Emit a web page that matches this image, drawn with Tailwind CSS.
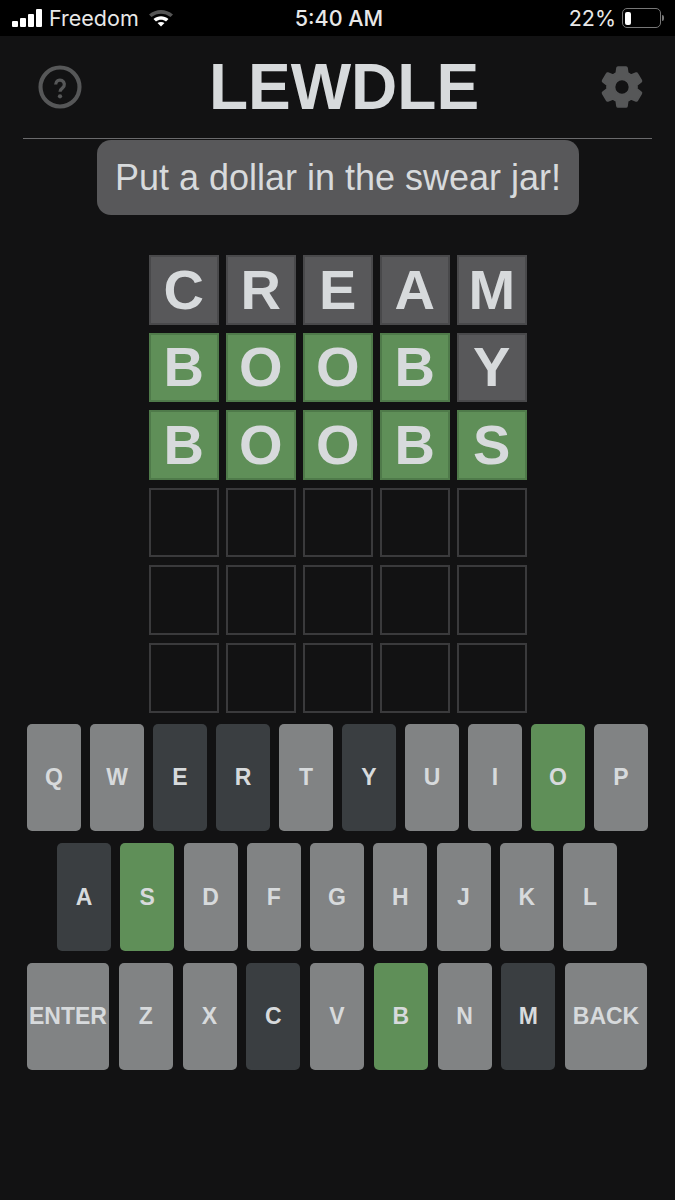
<!DOCTYPE html>
<html lang="en">
<head>
    <meta charset="UTF-8">
    <meta name="viewport" content="width=device-width, initial-scale=1.0">
    <script src="https://cdn.jsdelivr.net/npm/@tailwindcss/browser@4"></script>
    <title>Lewdle</title>
</head>
<body class="bg-[#121213] font-['Liberation_Sans',sans-serif] text-[#d7dadc]">
<div class="relative h-[1200px] w-[675px] overflow-hidden">
    <!-- status bar -->
    <div class="flex h-[36px] items-center justify-between bg-black pl-[12px] pr-[11px] font-['Inter',sans-serif] text-[21.5px] text-[#e8e8e8]">
        <div class="flex w-[190px] items-center">
            <div class="flex items-end gap-[2px]">
                <div class="h-[6px] w-[6px] rounded-[1px] bg-white"></div>
                <div class="h-[9px] w-[6px] rounded-[1px] bg-white"></div>
                <div class="h-[13px] w-[6px] rounded-[1px] bg-white"></div>
                <div class="h-[18px] w-[6px] rounded-[1px] bg-white"></div>
            </div>
            <span class="ml-[7px]">Freedom</span>
            <svg class="ml-[9px]" width="26" height="20" viewBox="0 0 26 20">
                <path d="M1 6.5 C8 0.5 18 0.5 25 6.5 L22.5 9 C17 4.5 9 4.5 3.5 9 Z" fill="#555"/>
                <path d="M5.5 11 C10 7.3 16 7.3 20.5 11 L18 13.5 C15 11 11 11 8 13.5 Z" fill="#fff"/>
                <path d="M9.5 15 C11.5 13.5 14.5 13.5 16.5 15 L13 18.5 Z" fill="#fff"/>
            </svg>
        </div>
        <span class="ml-[2px] font-medium">5:40 AM</span>
        <div class="flex w-[190px] items-center justify-end">
            <span>22%</span>
            <div class="ml-[6px] flex h-[20px] w-[39px] items-center rounded-[5px] border border-[#777] px-[2px]">
                <div class="h-[13px] w-[6px] rounded-[2px] bg-white"></div>
            </div>
            <div class="ml-[1px] h-[6px] w-[2px] rounded-r-sm bg-[#777]"></div>
        </div>
    </div>

    <!-- header -->
    <header class="mx-[23px] flex h-[103px] items-center justify-between border-b border-[#6a6a6c] pl-[11px] pr-[4px]">
        <svg width="52" height="52" viewBox="0 0 24 24" fill="none">
            <circle cx="12" cy="12" r="9" stroke="#565758" stroke-width="1.9"/>
            <path d="M10 10.8a2 2 0 1 1 3.2 1.6c-.8.6-1.2 1-1.2 1.8" stroke="#565758" stroke-width="1.5"/>
            <circle cx="12" cy="16.3" r="1" fill="#565758"/>
        </svg>
        <h1 class="flex-1 pl-[6px] text-center text-[64px] leading-none font-bold text-[#d7dadc]">LEWDLE</h1>
        <svg width="50" height="50" class="mx-[1px]" viewBox="0 0 24 24" fill="#565758" stroke="#565758" stroke-width="0.8" stroke-linejoin="round">
            <path d="M19.14 12.94c.04-.3.06-.61.06-.94 0-.32-.02-.64-.07-.94l2.03-1.58c.18-.14.23-.41.12-.61l-1.92-3.32c-.12-.22-.37-.29-.59-.22l-2.39.96c-.5-.38-1.03-.7-1.62-.94l-.36-2.54c-.04-.24-.24-.41-.48-.41h-3.84c-.24 0-.43.17-.47.41l-.36 2.54c-.59.24-1.13.57-1.62.94l-2.39-.96c-.22-.08-.47 0-.59.22L2.74 8.87c-.12.21-.08.47.12.61l2.03 1.58c-.05.3-.09.63-.09.94s.02.64.07.94l-2.03 1.58c-.18.14-.23.41-.12.61l1.92 3.32c.12.22.37.29.59.22l2.39-.96c.5.38 1.03.7 1.62.94l.36 2.54c.05.24.24.41.48.41h3.84c.24 0 .44-.17.47-.41l.36-2.54c.59-.24 1.13-.56 1.62-.94l2.39.96c.22.08.47 0 .59-.22l1.92-3.32c.12-.22.07-.47-.12-.61l-2.01-1.58zM12 15.6c-1.98 0-3.6-1.62-3.6-3.6s1.62-3.6 3.6-3.6 3.6 1.62 3.6 3.6-1.62 3.6-3.6 3.6z"/>
        </svg>
    </header>

    <!-- toast -->
    <div class="absolute left-[97px] top-[140px] flex h-[75px] w-[482px] items-center justify-center rounded-[14px] bg-[#58585a] text-[36px] text-[#d7dadc]">Put a dollar in the swear jar!</div>

    <!-- board -->
    <div class="mt-[116px] ml-[149px] grid w-[378px] grid-cols-[repeat(5,69.5px)] gap-x-[7.5px] gap-y-[8px] text-[56px] font-bold">
        <div class="flex h-[69.6px] items-center justify-center border-2 border-[#49494b] bg-[#58585a]">C</div>
        <div class="flex h-[69.6px] items-center justify-center border-2 border-[#49494b] bg-[#58585a]">R</div>
        <div class="flex h-[69.6px] items-center justify-center border-2 border-[#49494b] bg-[#58585a]">E</div>
        <div class="flex h-[69.6px] items-center justify-center border-2 border-[#49494b] bg-[#58585a]">A</div>
        <div class="flex h-[69.6px] items-center justify-center border-2 border-[#49494b] bg-[#58585a]">M</div>

        <div class="flex h-[69.6px] items-center justify-center border-2 border-[#4f7a4a] bg-[#5f8f58]">B</div>
        <div class="flex h-[69.6px] items-center justify-center border-2 border-[#4f7a4a] bg-[#5f8f58]">O</div>
        <div class="flex h-[69.6px] items-center justify-center border-2 border-[#4f7a4a] bg-[#5f8f58]">O</div>
        <div class="flex h-[69.6px] items-center justify-center border-2 border-[#4f7a4a] bg-[#5f8f58]">B</div>
        <div class="flex h-[69.6px] items-center justify-center border-2 border-[#49494b] bg-[#58585a]">Y</div>

        <div class="flex h-[69.6px] items-center justify-center border-2 border-[#4f7a4a] bg-[#5f8f58]">B</div>
        <div class="flex h-[69.6px] items-center justify-center border-2 border-[#4f7a4a] bg-[#5f8f58]">O</div>
        <div class="flex h-[69.6px] items-center justify-center border-2 border-[#4f7a4a] bg-[#5f8f58]">O</div>
        <div class="flex h-[69.6px] items-center justify-center border-2 border-[#4f7a4a] bg-[#5f8f58]">B</div>
        <div class="flex h-[69.6px] items-center justify-center border-2 border-[#4f7a4a] bg-[#5f8f58]">S</div>

        <div class="h-[69.6px] border-2 border-[#3a3a3c]"></div>
        <div class="h-[69.6px] border-2 border-[#3a3a3c]"></div>
        <div class="h-[69.6px] border-2 border-[#3a3a3c]"></div>
        <div class="h-[69.6px] border-2 border-[#3a3a3c]"></div>
        <div class="h-[69.6px] border-2 border-[#3a3a3c]"></div>

        <div class="h-[69.6px] border-2 border-[#3a3a3c]"></div>
        <div class="h-[69.6px] border-2 border-[#3a3a3c]"></div>
        <div class="h-[69.6px] border-2 border-[#3a3a3c]"></div>
        <div class="h-[69.6px] border-2 border-[#3a3a3c]"></div>
        <div class="h-[69.6px] border-2 border-[#3a3a3c]"></div>

        <div class="h-[69.6px] border-2 border-[#3a3a3c]"></div>
        <div class="h-[69.6px] border-2 border-[#3a3a3c]"></div>
        <div class="h-[69.6px] border-2 border-[#3a3a3c]"></div>
        <div class="h-[69.6px] border-2 border-[#3a3a3c]"></div>
        <div class="h-[69.6px] border-2 border-[#3a3a3c]"></div>
    </div>

    <!-- keyboard -->
    <div class="mt-[11px] flex flex-col gap-[12px] text-[23px] font-bold">
        <div class="ml-[27px] flex gap-[9px]">
            <div class="flex h-[107.5px] w-[54px] items-center justify-center rounded-[5px] bg-[#818384]">Q</div>
            <div class="flex h-[107.5px] w-[54px] items-center justify-center rounded-[5px] bg-[#818384]">W</div>
            <div class="flex h-[107.5px] w-[54px] items-center justify-center rounded-[5px] bg-[#3a3e41]">E</div>
            <div class="flex h-[107.5px] w-[54px] items-center justify-center rounded-[5px] bg-[#3a3e41]">R</div>
            <div class="flex h-[107.5px] w-[54px] items-center justify-center rounded-[5px] bg-[#818384]">T</div>
            <div class="flex h-[107.5px] w-[54px] items-center justify-center rounded-[5px] bg-[#3a3e41]">Y</div>
            <div class="flex h-[107.5px] w-[54px] items-center justify-center rounded-[5px] bg-[#818384]">U</div>
            <div class="flex h-[107.5px] w-[54px] items-center justify-center rounded-[5px] bg-[#818384]">I</div>
            <div class="flex h-[107.5px] w-[54px] items-center justify-center rounded-[5px] bg-[#5f8f58]">O</div>
            <div class="flex h-[107.5px] w-[54px] items-center justify-center rounded-[5px] bg-[#818384]">P</div>
        </div>
        <div class="ml-[57px] flex gap-[9.25px]">
            <div class="flex h-[107.5px] w-[54px] items-center justify-center rounded-[5px] bg-[#3a3e41]">A</div>
            <div class="flex h-[107.5px] w-[54px] items-center justify-center rounded-[5px] bg-[#5f8f58]">S</div>
            <div class="flex h-[107.5px] w-[54px] items-center justify-center rounded-[5px] bg-[#818384]">D</div>
            <div class="flex h-[107.5px] w-[54px] items-center justify-center rounded-[5px] bg-[#818384]">F</div>
            <div class="flex h-[107.5px] w-[54px] items-center justify-center rounded-[5px] bg-[#818384]">G</div>
            <div class="flex h-[107.5px] w-[54px] items-center justify-center rounded-[5px] bg-[#818384]">H</div>
            <div class="flex h-[107.5px] w-[54px] items-center justify-center rounded-[5px] bg-[#818384]">J</div>
            <div class="flex h-[107.5px] w-[54px] items-center justify-center rounded-[5px] bg-[#818384]">K</div>
            <div class="flex h-[107.5px] w-[54px] items-center justify-center rounded-[5px] bg-[#818384]">L</div>
        </div>
        <div class="ml-[27px] flex gap-[9.75px]">
            <div class="flex h-[107.5px] w-[82px] items-center justify-center rounded-[5px] bg-[#818384]">ENTER</div>
            <div class="flex h-[107.5px] w-[54px] items-center justify-center rounded-[5px] bg-[#818384]">Z</div>
            <div class="flex h-[107.5px] w-[54px] items-center justify-center rounded-[5px] bg-[#818384]">X</div>
            <div class="flex h-[107.5px] w-[54px] items-center justify-center rounded-[5px] bg-[#3a3e41]">C</div>
            <div class="flex h-[107.5px] w-[54px] items-center justify-center rounded-[5px] bg-[#818384]">V</div>
            <div class="flex h-[107.5px] w-[54px] items-center justify-center rounded-[5px] bg-[#5f8f58]">B</div>
            <div class="flex h-[107.5px] w-[54px] items-center justify-center rounded-[5px] bg-[#818384]">N</div>
            <div class="flex h-[107.5px] w-[54px] items-center justify-center rounded-[5px] bg-[#3a3e41]">M</div>
            <div class="flex h-[107.5px] w-[82px] items-center justify-center rounded-[5px] bg-[#818384]">BACK</div>
        </div>
    </div>
</div>
</body>
</html>
